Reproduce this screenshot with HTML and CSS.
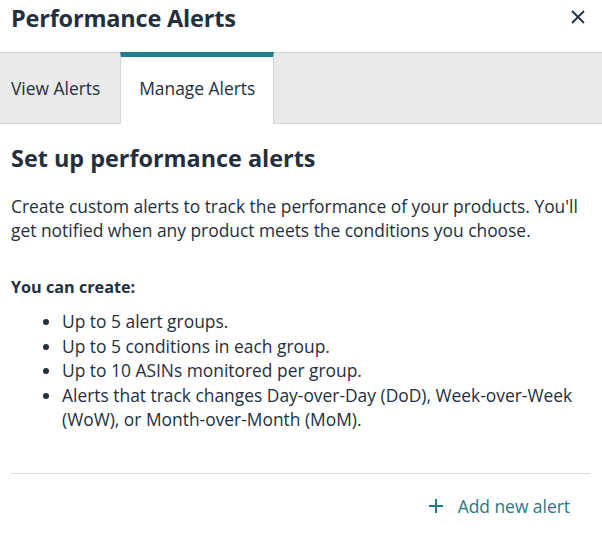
FILE: index.html
```html
<!DOCTYPE html>
<html lang="en">
  <head>
    <meta charset="UTF-8" />
    <meta name="viewport" content="width=device-width, initial-scale=1.0" />
    <title>Performance Alerts</title>
    <link rel="stylesheet" href="styles.css">
  </head>
  <body>
    <div class="panel">
      <div class="header">
        <h1 class="title">Performance Alerts</h1>
        <button class="closeBtn" aria-label="Close">
          <svg width="14" height="14" viewBox="0 0 14 14">
            <path d="M1 1 L13 13 M13 1 L1 13" stroke="#232f3e" stroke-width="1.8" fill="none" />
          </svg>
        </button>
      </div>

      <div class="tabs">
        <div class="tab">View Alerts</div>
        <div class="tab active">Manage Alerts</div>
      </div>

      <section class="content">
        <h2 class="heading">Set up performance alerts</h2>
        <p class="intro">
          Create custom alerts to track the performance of your products. You'll
          get notified when any product meets the conditions you choose.
        </p>

        <p class="label">You can create:</p>
        <ul class="list">
          <li>Up to 5 alert groups.</li>
          <li>Up to 5 conditions in each group.</li>
          <li>Up to 10 ASINs monitored per group.</li>
          <li>Alerts that track changes Day-over-Day (DoD), Week-over-Week (WoW), or Month-over-Month (MoM).</li>
        </ul>

        <div class="footer">
          <button class="addBtn">
            <svg width="16" height="16" viewBox="0 0 16 16">
              <path d="M8 1 V15 M1 8 H15" stroke="#1f7a8a" stroke-width="2" fill="none" />
            </svg>
            <span>Add new alert</span>
          </button>
        </div>
      </section>
    </div>
  </body>
</html>
```

FILE: styles.css
```css
body {
  margin: 0;
  font-family: "Open Sans", "Noto Sans", sans-serif;
  color: #232f3e;
  background: #fff;
}

.panel {
  width: 602px;
}

.header {
  display: flex;
  align-items: center;
  justify-content: space-between;
  height: 52px;
  padding: 0 17px 0 11px;
  box-sizing: border-box;
}

.title {
  margin: 0 0 16px;
  font-size: 23.5px;
  font-weight: 700;
  letter-spacing: -0.2px;
}

.closeBtn {
  background: none;
  border: none;
  padding: 0;
  margin-bottom: 18px;
  cursor: pointer;
  display: flex;
}

.tabs {
  display: flex;
  height: 72px;
  background: #eaeaeb;
  border-top: 1px solid #d5d9d9;
  border-bottom: 1px solid #d5d9d9;
  box-sizing: border-box;
}

.tab {
  display: flex;
  align-items: center;
  padding: 0 20px 0 11px;
  font-size: 17.4px;
  color: #232f3e;
}

.tab.active {
  background: #fff;
  border-top: 5px solid #1f7f8c;
  border-left: 1px solid #d5d9d9;
  border-right: 1px solid #d5d9d9;
  margin-top: -1px;
  margin-bottom: -1px;
  padding: 0 0 5px;
  width: 154px;
  box-sizing: border-box;
  justify-content: center;
}

.content {
  padding: 18px 12px 0 11px;
}

.heading {
  margin: 0;
  font-size: 23.4px;
  font-weight: 700;
  line-height: 32px;
}

.intro {
  margin: 20px 0 0;
  font-size: 17.4px;
  line-height: 24px;
}

.label {
  margin: 33px 0 0;
  font-size: 16.2px;
  font-weight: 700;
  line-height: 24px;
}

.list {
  margin: 10px 0 0;
  padding-left: 51px;
  font-size: 17.4px;
  line-height: 24.5px;
}

.footer {
  margin-top: 41px;
  border-top: 1px solid #d5d9d9;
  display: flex;
  justify-content: flex-end;
  padding: 20px 20px 0 0;
}

.addBtn {
  display: flex;
  align-items: center;
  gap: 14px;
  background: none;
  border: none;
  padding: 0;
  font-family: inherit;
  font-size: 17.4px;
  color: #1f7a8a;
  cursor: pointer;
}
```
